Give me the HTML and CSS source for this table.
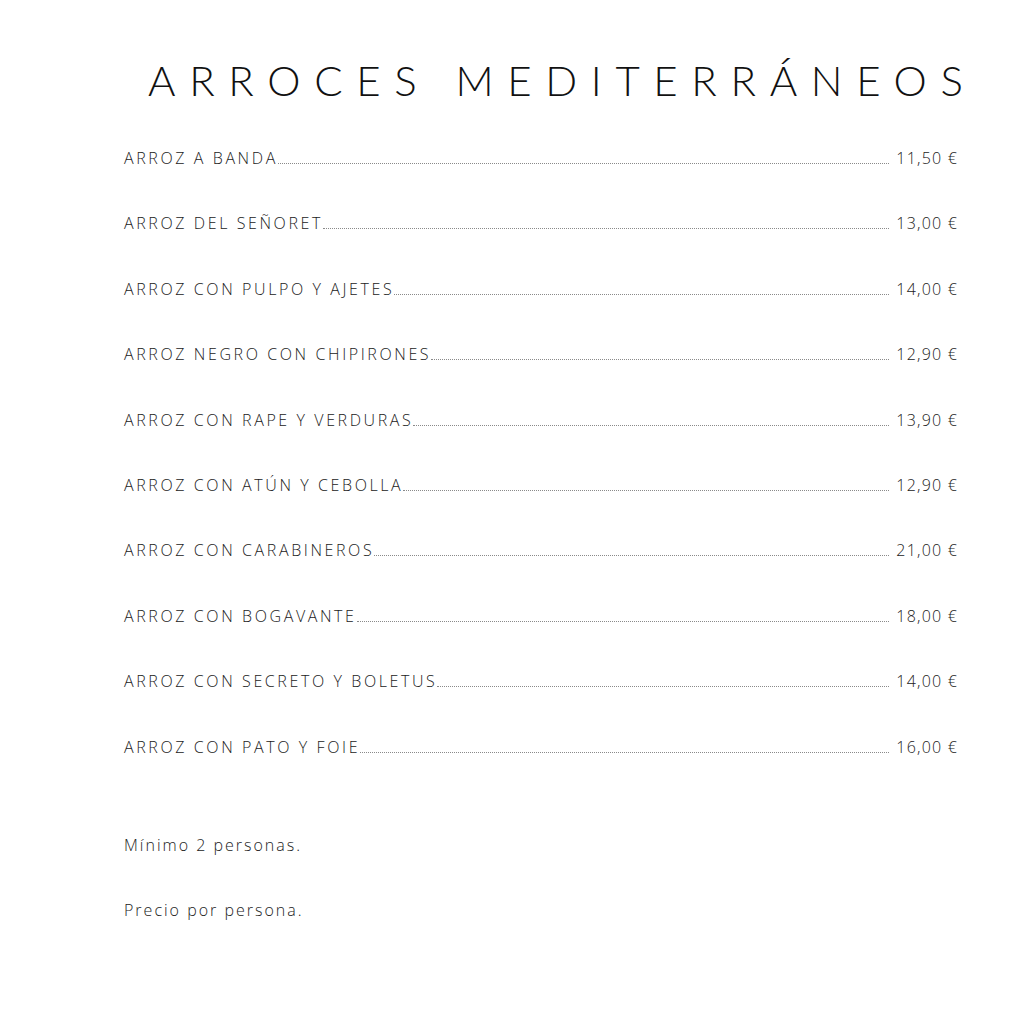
FILE: index.html
```html
<!DOCTYPE html>
<html lang="es">
<head>
<meta charset="utf-8">
<title>Arroces Mediterráneos</title>
<link rel="stylesheet" href="styles.css">
</head>
<body>
<main class="page">
  <h1 class="title">ARROCES MEDITERRÁNEOS</h1>
  <ul class="menu">
    <li class="item"><span class="name">ARROZ A BANDA</span><span class="dots"></span><span class="price">11,50 €</span></li>
    <li class="item"><span class="name">ARROZ DEL SEÑORET</span><span class="dots"></span><span class="price">13,00 €</span></li>
    <li class="item"><span class="name">ARROZ CON PULPO Y AJETES</span><span class="dots"></span><span class="price">14,00 €</span></li>
    <li class="item"><span class="name">ARROZ NEGRO CON CHIPIRONES</span><span class="dots"></span><span class="price">12,90 €</span></li>
    <li class="item"><span class="name">ARROZ CON RAPE Y VERDURAS</span><span class="dots"></span><span class="price">13,90 €</span></li>
    <li class="item"><span class="name">ARROZ CON ATÚN Y CEBOLLA</span><span class="dots"></span><span class="price">12,90 €</span></li>
    <li class="item"><span class="name">ARROZ CON CARABINEROS</span><span class="dots"></span><span class="price">21,00 €</span></li>
    <li class="item"><span class="name">ARROZ CON BOGAVANTE</span><span class="dots"></span><span class="price">18,00 €</span></li>
    <li class="item"><span class="name">ARROZ CON SECRETO Y BOLETUS</span><span class="dots"></span><span class="price">14,00 €</span></li>
    <li class="item"><span class="name">ARROZ CON PATO Y FOIE</span><span class="dots"></span><span class="price">16,00 €</span></li>
  </ul>
  <p class="note">Mínimo 2 personas.</p>
  <p class="note">Precio por persona.</p>
</main>
</body>
</html>
```

FILE: styles.css
```css
html, body {
  margin: 0;
  padding: 0;
  background: #ffffff;
}
body {
  font-family: "Open Sans", "Lato", sans-serif;
  color: #222;
}
.page {
  width: 1024px;
  height: 1024px;
  box-sizing: border-box;
  padding: 52px 66px 0 124px;
}
.title {
  margin: 0 0 0 24px;
  font-family: "Lato", sans-serif;
  font-weight: 300;
  font-size: 42px;
  line-height: 56px;
  letter-spacing: 0.325em;
  color: #111;
  white-space: nowrap;
}
.menu {
  list-style: none;
  margin: 39px 0 0 0;
  padding: 0;
}
.item {
  display: flex;
  align-items: baseline;
  height: 65.4px;
  font-size: 16px;
  font-weight: 300;
  letter-spacing: 2.6px;
  color: #222;
}
.name {
  white-space: nowrap;
}
.dots {
  flex: 1;
  margin: 0 7px 0 0;
  border-bottom: 1px dotted #8a8a8a;
  height: 1px;
}
.price {
  white-space: nowrap;
  letter-spacing: 1.2px;
}
.note {
  margin: 0;
  font-size: 16px;
  font-weight: 300;
  letter-spacing: 2px;
  color: #222;
  height: 65.5px;
}
.menu + .note {
  margin-top: 33px;
}
```
